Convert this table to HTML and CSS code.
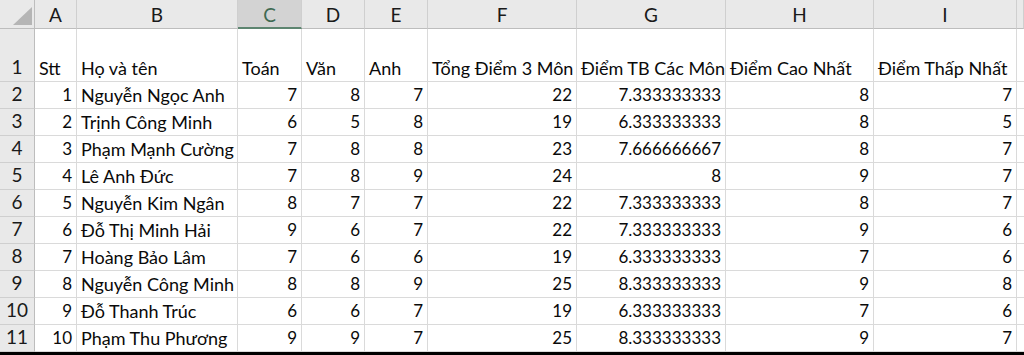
FILE: index.html
```html
<!DOCTYPE html>
<html lang="vi">
<head>
<meta charset="utf-8">
<title>Bảng điểm</title>
<link rel="stylesheet" href="styles.css">
</head>
<body>
<div class="sheet">
  <div class="corner"><span class="tri"></span></div>
  <div class="ch">A</div>
  <div class="ch">B</div>
  <div class="ch sel">C</div>
  <div class="ch">D</div>
  <div class="ch">E</div>
  <div class="ch">F</div>
  <div class="ch">G</div>
  <div class="ch">H</div>
  <div class="ch">I</div>
  <div class="ch"></div>

  <div class="rh">1</div>
  <div class="c">Stt</div>
  <div class="c">Họ và tên</div>
  <div class="c">Toán</div>
  <div class="c">Văn</div>
  <div class="c">Anh</div>
  <div class="c">Tổng Điểm 3 Môn</div>
  <div class="c">Điểm TB Các Môn</div>
  <div class="c">Điểm Cao Nhất</div>
  <div class="c">Điểm Thấp Nhất</div>
  <div class="c"></div>

  <div class="rh">2</div><div class="c n">1</div><div class="c">Nguyễn Ngọc Anh</div><div class="c n">7</div><div class="c n">8</div><div class="c n">7</div><div class="c n">22</div><div class="c n">7.333333333</div><div class="c n">8</div><div class="c n">7</div><div class="c"></div>
  <div class="rh">3</div><div class="c n">2</div><div class="c">Trịnh Công Minh</div><div class="c n">6</div><div class="c n">5</div><div class="c n">8</div><div class="c n">19</div><div class="c n">6.333333333</div><div class="c n">8</div><div class="c n">5</div><div class="c"></div>
  <div class="rh">4</div><div class="c n">3</div><div class="c">Phạm Mạnh Cường</div><div class="c n">7</div><div class="c n">8</div><div class="c n">8</div><div class="c n">23</div><div class="c n">7.666666667</div><div class="c n">8</div><div class="c n">7</div><div class="c"></div>
  <div class="rh">5</div><div class="c n">4</div><div class="c">Lê Anh Đức</div><div class="c n">7</div><div class="c n">8</div><div class="c n">9</div><div class="c n">24</div><div class="c n">8</div><div class="c n">9</div><div class="c n">7</div><div class="c"></div>
  <div class="rh">6</div><div class="c n">5</div><div class="c">Nguyễn Kim Ngân</div><div class="c n">8</div><div class="c n">7</div><div class="c n">7</div><div class="c n">22</div><div class="c n">7.333333333</div><div class="c n">8</div><div class="c n">7</div><div class="c"></div>
  <div class="rh">7</div><div class="c n">6</div><div class="c">Đỗ Thị Minh Hải</div><div class="c n">9</div><div class="c n">6</div><div class="c n">7</div><div class="c n">22</div><div class="c n">7.333333333</div><div class="c n">9</div><div class="c n">6</div><div class="c"></div>
  <div class="rh">8</div><div class="c n">7</div><div class="c">Hoàng Bảo Lâm</div><div class="c n">7</div><div class="c n">6</div><div class="c n">6</div><div class="c n">19</div><div class="c n">6.333333333</div><div class="c n">7</div><div class="c n">6</div><div class="c"></div>
  <div class="rh">9</div><div class="c n">8</div><div class="c">Nguyễn Công Minh</div><div class="c n">8</div><div class="c n">8</div><div class="c n">9</div><div class="c n">25</div><div class="c n">8.333333333</div><div class="c n">9</div><div class="c n">8</div><div class="c"></div>
  <div class="rh">10</div><div class="c n">9</div><div class="c">Đỗ Thanh Trúc</div><div class="c n">6</div><div class="c n">6</div><div class="c n">7</div><div class="c n">19</div><div class="c n">6.333333333</div><div class="c n">7</div><div class="c n">6</div><div class="c"></div>
  <div class="rh">11</div><div class="c n">10</div><div class="c">Phạm Thu Phương</div><div class="c n">9</div><div class="c n">9</div><div class="c n">7</div><div class="c n">25</div><div class="c n">8.333333333</div><div class="c n">9</div><div class="c n">7</div><div class="c"></div>
</div>
<div class="bottom-bar"></div>
</body>
</html>
```

FILE: styles.css
```css
html, body {
  margin: 0;
  padding: 0;
  background: #ffffff;
  overflow: hidden;
}

body {
  width: 1024px;
  height: 355px;
  font-family: Lato, "Noto Sans", sans-serif;
  font-size: 18px;
  color: #0a0a0a;
}

.sheet {
  display: grid;
  grid-template-columns: 35px 42px 161px 64px 63px 63px 149px 149px 148px 143px 7px;
  grid-template-rows: 29px 53px repeat(10, 27px);
  overflow: hidden;
}

.sheet > div {
  box-sizing: border-box;
  white-space: nowrap;
  overflow: hidden;
}

.corner {
  background: #e9e9e9;
  border-right: 1px solid #bdbdbd;
  border-bottom: 1px solid #bdbdbd;
  position: relative;
}

.tri {
  position: absolute;
  right: 2px;
  bottom: 3px;
  width: 0;
  height: 0;
  border-left: 19px solid transparent;
  border-bottom: 18px solid #b5b5b5;
}

.ch {
  background: #e9e9e9;
  border-right: 1px solid #cfcfcf;
  border-bottom: 1px solid #bdbdbd;
  display: flex;
  align-items: center;
  justify-content: center;
  font-size: 19px;
  color: #1a1a1a;
  padding-top: 1px;
}

.ch.sel {
  background: #d3d3d3;
  color: #3f6a52;
  border-bottom: 2px solid #5d8570;
}

.rh {
  background: #e9e9e9;
  border-right: 1px solid #bdbdbd;
  border-bottom: 1px solid #cfcfcf;
  display: flex;
  align-items: flex-end;
  justify-content: center;
  padding-bottom: 3px;
  font-size: 19px;
  color: #1a1a1a;
}

.c {
  border-right: 1px solid #dadada;
  border-bottom: 1px solid #dadada;
  display: flex;
  align-items: flex-end;
  justify-content: flex-start;
  padding: 0 4px 3px 4px;
  line-height: 20px;
}

.c.n {
  justify-content: flex-end;
  font-size: 17px;
}

.bottom-bar {
  height: 3px;
  background: #000;
}
```
